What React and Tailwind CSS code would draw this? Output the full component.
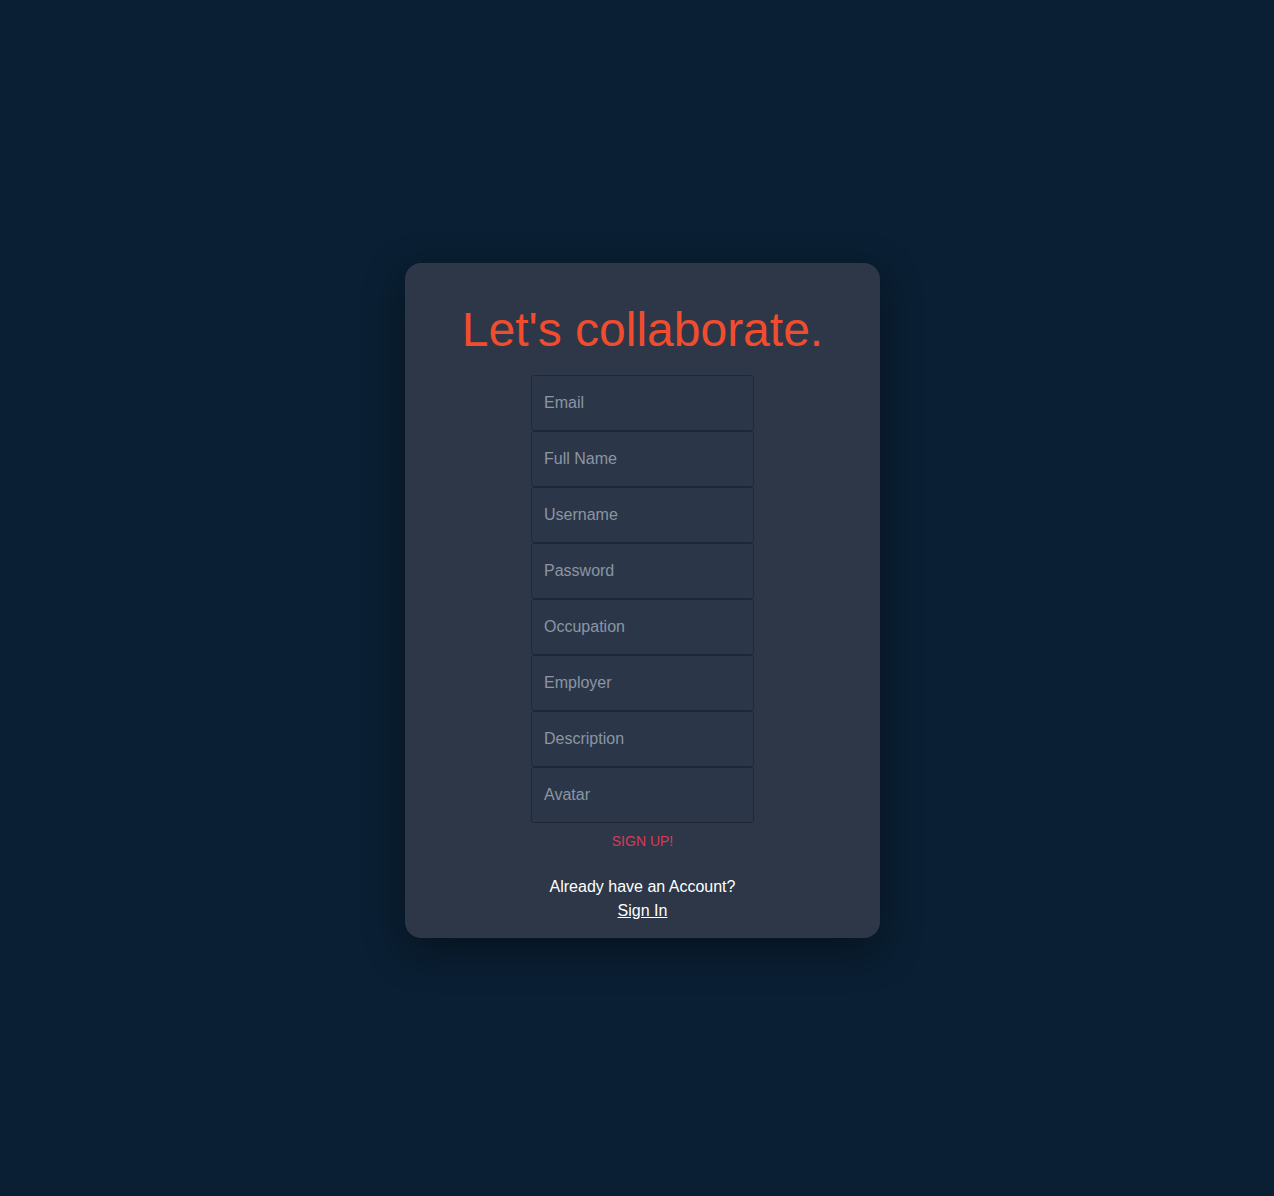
export default function App() {
  const fields = ["Email", "Full Name", "Username", "Password", "Occupation", "Employer", "Description", "Avatar"];
  return (
    <div className="min-h-[1196px] w-full bg-[#0a1f33] flex items-center justify-center pt-[5px] pl-[11px]" style={{ fontFamily: '"Liberation Sans", Arial, sans-serif' }}>
      <div className="w-[475px] h-[675px] bg-[#2d3748] rounded-[16px] shadow-[0_12px_40px_rgba(0,0,0,0.4)] flex flex-col items-center pt-[39px]">
        <h1 className="text-[48px] leading-[55px] text-[#f24c2f] m-0">Let's collaborate.</h1>
        <div className="mt-[18px] flex flex-col w-[223px]">
          {fields.map((f) => (
            <input
              key={f}
              placeholder={f}
              className="h-[56px] w-full bg-[#2b3749] border border-[#1f2836] rounded-[3px] px-[12px] text-[16px] text-white placeholder:text-[#8c95a3] outline-none"
              style={{ fontFamily: '"Liberation Sans", Arial, sans-serif' }}
            />
          ))}
        </div>
        <button className="mt-[8px] h-[20px] text-[14px] leading-[20px] text-[#d93a56] uppercase bg-transparent">SIGN UP!</button>
        <p className="mt-[24px] text-[16px] leading-[24px] text-white">Already have an Account?</p>
        <a href="#" className="text-[16px] leading-[24px] text-white underline">Sign In</a>
      </div>
    </div>
  );
}
